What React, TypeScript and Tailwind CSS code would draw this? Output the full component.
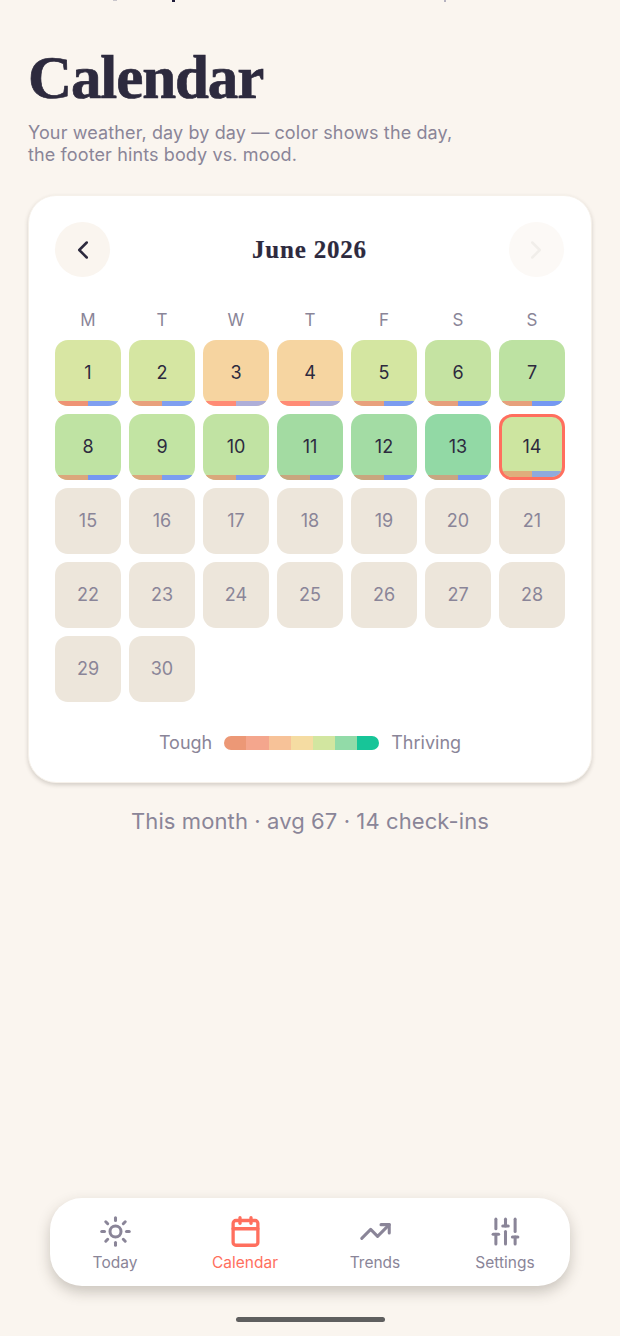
import { ChevronLeft, ChevronRight, Sun, Calendar, TrendingUp, SlidersVertical } from "lucide-react";

type D = { n: number; bg: string; l: string; r: string; today?: boolean };
const days: D[] = [
  { n: 1, bg: "bg-[#d8e6a3]", l: "bg-[#ee9375]", r: "bg-[#7f9ff0]" },
  { n: 2, bg: "bg-[#d5e6a2]", l: "bg-[#e8a07c]", r: "bg-[#7f9ff0]" },
  { n: 3, bg: "bg-[#f6d4a0]", l: "bg-[#ff8b75]", r: "bg-[#aeaed8]" },
  { n: 4, bg: "bg-[#f6d5a1]", l: "bg-[#ff8b75]", r: "bg-[#aeaed8]" },
  { n: 5, bg: "bg-[#d4e6a1]", l: "bg-[#e8a07c]", r: "bg-[#7b9cf0]" },
  { n: 6, bg: "bg-[#c5e3a2]", l: "bg-[#e69f7c]", r: "bg-[#7598f2]" },
  { n: 7, bg: "bg-[#bde2a2]", l: "bg-[#e6a07c]", r: "bg-[#7598f2]" },
  { n: 8, bg: "bg-[#bfe3a3]", l: "bg-[#dba77b]", r: "bg-[#7598f2]" },
  { n: 9, bg: "bg-[#c2e4a3]", l: "bg-[#dba77b]", r: "bg-[#7b9ef0]" },
  { n: 10, bg: "bg-[#c1e3a3]", l: "bg-[#d9a87b]", r: "bg-[#7b9ef0]" },
  { n: 11, bg: "bg-[#a3dba2]", l: "bg-[#c8a67e]", r: "bg-[#7598f2]" },
  { n: 12, bg: "bg-[#a3dca4]", l: "bg-[#c8a67e]", r: "bg-[#7598f2]" },
  { n: 13, bg: "bg-[#92d9a5]", l: "bg-[#c9a681]", r: "bg-[#7598f2]" },
  { n: 14, bg: "bg-[#cde5a0]", l: "bg-[#dfae7c]", r: "bg-[#8faadc]", today: true },
];
const future = Array.from({ length: 16 }, (_, i) => i + 15);
const legend = ["bg-[#ec9876]", "bg-[#f4a68d]", "bg-[#f7c298]", "bg-[#f5dca2]", "bg-[#d2e6a0]", "bg-[#92dba8]", "bg-[#17c598]"];

function NavItem({ icon, label, active }: { icon: React.ReactNode; label: string; active?: boolean }) {
  return (
    <div className={`flex-1 flex flex-col items-center ${active ? "text-[#ff6f5e]" : "text-[#8a8598]"}`}>
      {icon}
      <span className="text-[15.5px] leading-[20px] mt-[5px]">{label}</span>
    </div>
  );
}

export default function App() {
  return (
    <div className="relative w-[620px] h-[1336px] bg-[#faf5ef] flex flex-col overflow-hidden font-['Inter',sans-serif]">
      <div className="absolute top-0 left-[113px] w-[4px] h-[1px] bg-[#c9c6cc]" />
      <div className="absolute top-0 left-[172px] w-[3px] h-[2px] bg-[#1f1c3a]" />
      <div className="absolute top-0 left-[444px] w-[2px] h-[2px] bg-[#b5b2c0]" />

      <div className="px-[28px] pt-[44px]">
        <h1 className="font-['Liberation_Serif',serif] font-bold text-[61px] leading-[68px] tracking-[-1.1px] [-webkit-text-stroke:0.7px_#2d2a3e] text-[#2d2a3e]">
          Calendar
        </h1>
        <p className="mt-[10px] text-[18px] leading-[22px] tracking-[0.12px] text-[#8a8598]">
          Your weather, day by day — color shows the day,
          <br />
          the footer hints body vs. mood.
        </p>
      </div>

      <div className="mx-[28px] mt-[29px] h-[588px] rounded-[28px] bg-white border border-[#f6f1ea] shadow-[0_2px_4px_rgba(60,50,40,0.2)] px-[26px] pt-[26px]">
        <div className="flex items-center justify-between h-[55px] pr-[1px]">
          <div className="w-[55px] h-[55px] rounded-full bg-[#faf5ef] flex items-center justify-center text-[#2d2a3e]">
            <ChevronLeft size={30} strokeWidth={2} />
          </div>
          <div className="pt-[1px] font-['Liberation_Serif',serif] font-bold text-[25px] tracking-[0.8px] [-webkit-text-stroke:0.2px_#2d2a3e] text-[#2d2a3e]">
            June 2026
          </div>
          <div className="w-[55px] h-[55px] rounded-full bg-[#fcf9f6] flex items-center justify-center text-[#f1eeea]">
            <ChevronRight size={30} strokeWidth={2} />
          </div>
        </div>

        <div className="grid grid-cols-[repeat(7,66px)] gap-x-[8px] mt-[32px] text-center text-[17px] leading-[22px] text-[#8a8598]">
          {["M", "T", "W", "T", "F", "S", "S"].map((d, i) => (
            <div key={i}>{d}</div>
          ))}
        </div>

        <div className="grid grid-cols-[repeat(7,66px)] auto-rows-[66px] gap-[8px] mt-[9px]">
          {days.map((d) => (
            <div
              key={d.n}
              className={`relative rounded-[13px] overflow-hidden flex items-center justify-center pb-[1px] text-[18px] text-[#2d2a3e] ${d.bg} ${
                d.today ? "border-[3px] border-[#ff6f5e]" : ""
              }`}
            >
              {d.n}
              <div className={`absolute bottom-0 left-0 right-0 flex ${d.today ? "h-[6px]" : "h-[5px]"}`}>
                <div className={`flex-1 ${d.l}`} />
                <div className={`flex-1 ${d.r}`} />
              </div>
            </div>
          ))}
          {future.map((n) => (
            <div key={n} className="rounded-[13px] bg-[#ede6db] flex items-center justify-center pb-[1px] text-[18px] text-[#8a8598]">
              {n}
            </div>
          ))}
        </div>

        <div className="flex items-center justify-center gap-[12px] mt-[30px] text-[18px] leading-[22px] text-[#8a8598]">
          <span>Tough</span>
          <div className="flex w-[155px] h-[14px] rounded-full overflow-hidden">
            {legend.map((c) => (
              <div key={c} className={`flex-1 ${c}`} />
            ))}
          </div>
          <span>Thriving</span>
        </div>
      </div>

      <div className="mt-[24px] text-center text-[22px] leading-[28px] tracking-[0.1px] text-[#8a8598]">This month · avg 67 · 14 check-ins</div>

      <div className="mt-auto mx-[50px] h-[88px] pt-[3px] rounded-[32px] bg-white shadow-[0_6px_14px_rgba(60,50,40,0.25)] flex items-center">
        <NavItem icon={<Sun size={33} strokeWidth={2.2} />} label="Today" />
        <NavItem active icon={<Calendar size={33} strokeWidth={2.4} />} label="Calendar" />
        <NavItem icon={<TrendingUp size={33} strokeWidth={2.2} />} label="Trends" />
        <NavItem icon={<SlidersVertical size={33} strokeWidth={2.2} />} label="Settings" />
      </div>
      <div className="mt-[31px] mb-[14px] mx-auto w-[149px] h-[5px] rounded-full bg-[#5f5f5f]" />
    </div>
  );
}
